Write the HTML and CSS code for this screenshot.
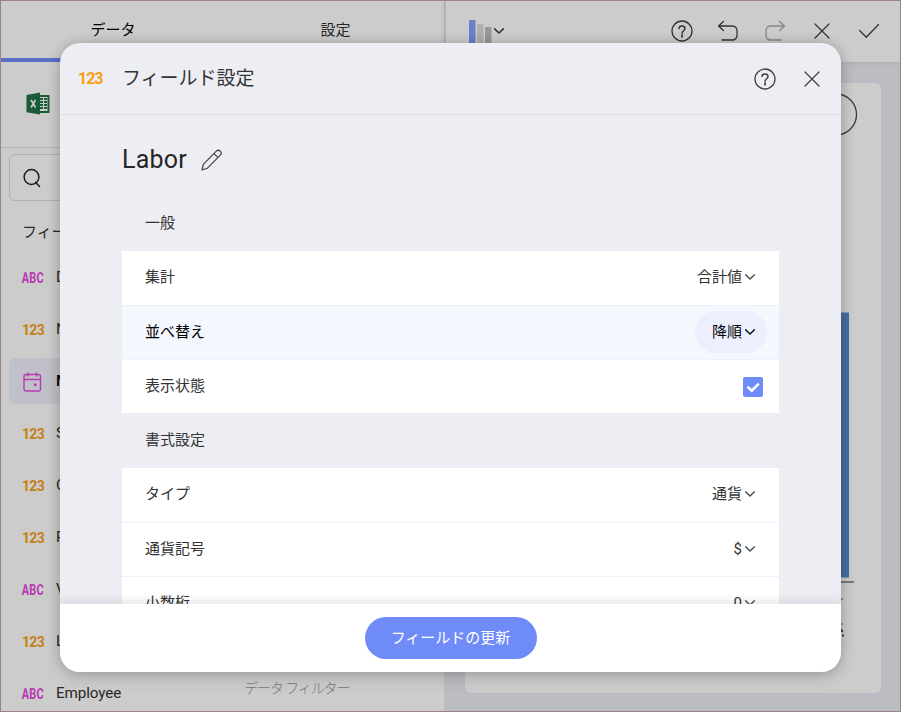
FILE: index.html
```html
<!DOCTYPE html>
<html lang="ja">
<head>
<meta charset="utf-8">
<title>フィールド設定</title>
<link rel="stylesheet" href="styles.css">
</head>
<body>
<svg class="defs" width="0" height="0">
  <symbol id="help" viewBox="0 0 22 22"><circle cx="11" cy="11" r="10" /><path d="M8 8.6C8 6.9 9.3 5.9 11 5.9s3 1 3 2.6c0 2.3-2.9 2.2-2.9 4.9" stroke-width="1.5"/><path d="M11 15.2v1.6" stroke-width="1.7"/></symbol>
  <symbol id="close" viewBox="0 0 16 16"><path d="M1 1l14 14M15 1L1 15"/></symbol>
  <symbol id="chev" viewBox="0 0 10 6"><path d="M.6 .8L5 5 9.4 .8"/></symbol>
</svg>
<div class="app">
  <section class="data-pane">
    <nav class="tabs"><div class="tab active">データ</div><div class="tab">設定</div></nav>
    <div class="source">
      <svg width="24" height="24" viewBox="0 0 24 24"><path d="M12 3h11.500v18H12z" fill="#217346"/><path d="M13 5h8.500v14H13z" fill="#fff"/><path d="M14 6h3v2h-3zM18 6h3v2h-3zM14 9h3v2h-3zM18 9h3v2h-3zM14 12h3v2h-3zM18 12h3v2h-3zM14 15h3v2h-3zM18 15h3v2h-3z" fill="#217346"/><path d="M.5 3L14 .5v22L.5 20.200z" fill="#217346"/><path d="M5 8l4.500 7.500M9.500 8L5 15.500" stroke="#fff" stroke-width="1.700"/></svg>
    </div>
    <div class="search"><svg class="ic" width="18" height="20" viewBox="0 0 18 20"><circle cx="8.500" cy="9" r="7.400"/><path d="M12.500 14.200l4 4.300"/></svg></div>
    <div class="list-title">フィー</div>
    <div class="fields">
      <div class="field"><span class="kind abc">ABC</span><span>D</span></div>
      <div class="field"><span class="kind num">123</span><span>N</span></div>
      <div class="field selected"><span class="kind"><svg width="19" height="20" viewBox="0 0 19 20"><rect x="1" y="2.500" width="16.500" height="16.500" rx="2"/><path d="M1 7.500h16.500M5 .5v4M13.500 .5v4"/><path d="M11 11.500h2.500v2.500h-2.500z" class="dot"/></svg></span><span>M</span></div>
      <div class="field"><span class="kind num">123</span><span>S</span></div>
      <div class="field"><span class="kind num">123</span><span>C</span></div>
      <div class="field"><span class="kind num">123</span><span>P</span></div>
      <div class="field"><span class="kind abc">ABC</span><span>V</span></div>
      <div class="field"><span class="kind num">123</span><span>L</span></div>
      <div class="field"><span class="kind abc">ABC</span><span>Employee</span><span class="filter-label">データ フィルター</span></div>
    </div>
  </section>
  <section class="view-pane">
    <header class="toolbar">
      <div class="chart-type"><svg width="23" height="23" viewBox="0 0 23 23"><rect width="6.500" height="23" rx="1" fill="#879efa"/><rect x="8" y="4" width="6.500" height="19" rx="1" fill="#dcdcdc"/><rect x="16" y="7" width="6.500" height="16" rx="1" fill="#bfbfbf"/></svg><svg class="ic chev" width="10" height="6"><use href="#chev"/></svg></div>
      <div class="tools">
        <svg class="ic" width="22" height="22"><use href="#help"/></svg>
        <svg class="ic" width="22" height="22" viewBox="0 0 22 22"><path d="M6.500 1.500L1.500 6l5 4.500M1.500 6h14a4.500 4.500 0 0 1 4.500 4.500v5a4.500 4.500 0 0 1-4.500 4.500H5"/></svg>
        <svg class="ic muted" width="22" height="22" viewBox="0 0 22 22"><path d="M15.500 1.500l5 4.500-5 4.500M20.500 6h-14a4.500 4.500 0 0 0-4.500 4.500v5a4.500 4.500 0 0 0 4.500 4.500H17"/></svg>
        <svg class="ic x" width="16" height="16"><use href="#close"/></svg>
        <svg class="ic" width="20" height="14" viewBox="0 0 20 14"><path d="M.6 6.500l6.700 6.700L19.500 .5"/></svg>
      </div>
    </header>
    <div class="canvas"><div class="card">
      <svg width="416" height="610" viewBox="0 0 416 610"><circle cx="371" cy="31.500" r="20.500" fill="none" stroke="#4a4a4a" stroke-width="1.300"/><path d="M345 229.500h39v265h-39z" fill="#598acb"/><path d="M340 499h49" stroke="#9a9a9a" stroke-width="2"/><path d="M376 516h2M376 541h2" stroke="#aaa" stroke-width="2"/><path d="M376 546l1.500 3M377 552.500h2" stroke="#555" stroke-width="2" fill="none"/></svg>
    </div></div>
  </section>
</div>
<div class="backdrop">
  <main class="dialog">
    <header class="dialog-head"><span class="num big">123</span><h1>フィールド設定</h1>
      <svg class="ic" width="22" height="22"><use href="#help"/></svg><svg class="ic x" width="16" height="16"><use href="#close"/></svg>
    </header>
    <div class="dialog-body">
      <div class="name"><span>Labor</span><svg class="ic pencil" width="21" height="22" viewBox="0 0 21 22"><path d="M1 21l1.300-5.600L15.300 2.200a2.800 2.800 0 0 1 4 4L6.200 19.300zM13 4.600l4 4"/></svg></div>
      <h2>一般</h2>
      <div class="group">
        <div class="row"><span>集計</span><span class="value">合計値<svg class="ic chev" width="10" height="6"><use href="#chev"/></svg></span></div>
        <div class="row hover"><span>並べ替え</span><span class="value pill">降順<svg class="ic chev" width="10" height="6"><use href="#chev"/></svg></span></div>
        <div class="row"><span>表示状態</span><span class="check"><svg width="20" height="20" viewBox="0 0 20 20"><path d="M4.400 9.600l4.400 4 7-7"/></svg></span></div>
      </div>
      <h2 class="second">書式設定</h2>
      <div class="group">
        <div class="row"><span>タイプ</span><span class="value">通貨<svg class="ic chev" width="10" height="6"><use href="#chev"/></svg></span></div>
        <div class="row"><span>通貨記号</span><span class="value">$<svg class="ic chev" width="10" height="6"><use href="#chev"/></svg></span></div>
        <div class="row"><span>小数桁</span><span class="value">0<svg class="ic chev" width="10" height="6"><use href="#chev"/></svg></span></div>
      </div>
    </div>
    <footer class="dialog-foot"><button>フィールドの更新</button></footer>
  </main>
</div>
</body>
</html>
```
FILE: styles.css
```css
* { box-sizing: border-box; }
body {
  margin: 0; width: 901px; height: 712px; overflow: hidden;
  font: 15px/20px Roboto, "Noto Sans CJK JP", sans-serif; color: #333;
}
svg { display: block; flex: none; }
.defs { position: absolute; }
.ic { fill: none; stroke: #404040; stroke-width: 1.4; stroke-linecap: round; stroke-linejoin: round; }
.app { display: grid; grid-template-columns: 444px 1fr; height: 712px; }
.data-pane { background: #fff; overflow: hidden; }
.tabs { display: grid; grid-template-columns: 226px 1fr; height: 62px; }
.tab { display: flex; align-items: center; justify-content: center; border-bottom: 4px solid transparent; padding: 2px 0 0 1px; }
.tab.active { color: #000; border-color: #6e8bf7; padding-left: 0; }
.source { height: 86px; padding: 30px 0 0 26px; border-bottom: 1px solid #dfe0e8; }
.search { height: 47px; margin: 6px 9px 0; border: 1px solid #dcdce0; border-radius: 6px; display: flex; align-items: center; padding-left: 13px; }
.search .ic { stroke: #222; stroke-width: 1.5; }
.list-title { margin: 21px 0 0 22px; height: 32px; }
.fields { display: grid; gap: 6px; padding: 0 9px; }
.field { display: flex; align-items: center; height: 46px; font-size: 15.2px; padding: 0 0 0 12px; border-radius: 6px; letter-spacing: -.1px; }
.field.selected { background: #f1f2fb; color: #000; font-weight: 500; }
.kind { width: 35px; font-weight: 700; font-size: 14px; padding-top: 1px; }
.kind svg { fill: none; stroke: #ea48df; stroke-width: 1.4; margin-left: 2px; }
.kind .dot { fill: #ea48df; stroke: none; }
.abc { color: #ea48df; font-size: 15px; letter-spacing: .3px; transform: scaleX(.73); transform-origin: 0 50%; padding-left: 1px; }
.num { color: #f79f17; font-weight: 700; letter-spacing: -.7px; }
.kind.num { padding-left: 1px; }
.filter-label { margin: -10px 0 0 123px; color: #999; font-size: 14px; font-weight: 300; letter-spacing: -1.1px; }
.view-pane { background: #ecedf4; display: flex; flex-direction: column; }
.toolbar { height: 62px; background: #fff; border-left: 2px solid #dedee0; display: flex; justify-content: space-between; padding: 0 22px 0 23px; box-shadow: 0 1px 5px rgba(0,0,0,.1); }
.chart-type { display: flex; gap: 2px; padding-top: 20px; }
.chart-type .chev { margin-top: 8px; stroke-width: 1.6; }
.tools { display: flex; align-items: center; gap: 25px; }
.tools .ic { stroke-width: 1.3; }
.tools .x { margin: 0 4px 0 3px; }
.tools .ic:first-child { margin-right: -1px; }
.tools .muted { stroke: #aaa; }
.canvas { padding: 21px 20px 20px 21px; flex: 1; }
.card { background: #fff; border-radius: 6px; height: 610px; overflow: hidden; }
.backdrop { position: absolute; inset: 0; background: rgba(0,0,0,.2); border: 1px solid #9c8191; padding: 42px 60px; }
.dialog { width: 781px; height: 629px; margin-left: -1px; border-radius: 20px; background: #edeef4; box-shadow: 0 0 12px rgba(0,0,0,.18), 0 6px 18px rgba(0,0,0,.12); overflow: hidden; display: flex; flex-direction: column; }
.dialog-head { height: 72px; flex: none; border-bottom: 1px solid #dcdde1; display: flex; align-items: center; padding: 0 21px 0 18px; }
.dialog-head h1 { font-size: 19px; font-weight: 400; margin: 0 auto 0 0; }
.dialog-head .ic { stroke-width: 1.3; }
.big { width: 44px; font-size: 16px; letter-spacing: -1px; padding-top: 1px; }
.dialog-head .x { margin-left: 28px; }
.dialog-body { flex: 1; min-height: 0; overflow: hidden; padding: 0 62px; }
.name { height: 90px; display: flex; align-items: center; gap: 14px; font-size: 25px; line-height: 30px; color: #262626; letter-spacing: .2px; }
.pencil { stroke-width: 1.2; }
h2 { font-size: 15px; font-weight: 400; margin: 0; padding: 8px 23px 0; height: 46px; }
h2.second { height: 55px; padding-top: 17px; }
.group { background: #fff; }
.row { height: 55px; display: flex; align-items: center; justify-content: space-between; padding: 0 24px 2px 23px; border-bottom: 1px solid #f0f1f7; }
.row:nth-child(2) { height: 54px; padding-bottom: 1px; }
.row:last-child { height: 53px; border: 0; padding-bottom: 2px; }
.row.hover { background: #f4f7fe; color: #000; }
.value { display: flex; align-items: center; gap: 3px; }
.value .ic { stroke-width: 1.25; }
.pill { height: 42px; border-radius: 21px; background: #eceffe; padding: 0 12px 0 17px; margin-right: -12px; }
.pill .ic { stroke: #111; stroke-width: 1.5; }
.check { background: #6e8bf7; border-radius: 2px; margin: 2px -8px 0 0; }
.check path { fill: none; stroke: #fff; stroke-width: 2.6; }
.dialog-foot { height: 68px; flex: none; background: #fff; box-shadow: 0 -3px 10px rgba(0,0,0,.1); display: flex; align-items: center; justify-content: center; }
button { width: 172px; height: 42px; border: 0; border-radius: 21px; background: #6e8bf7; color: #fff; font: inherit; padding: 0; }
```
